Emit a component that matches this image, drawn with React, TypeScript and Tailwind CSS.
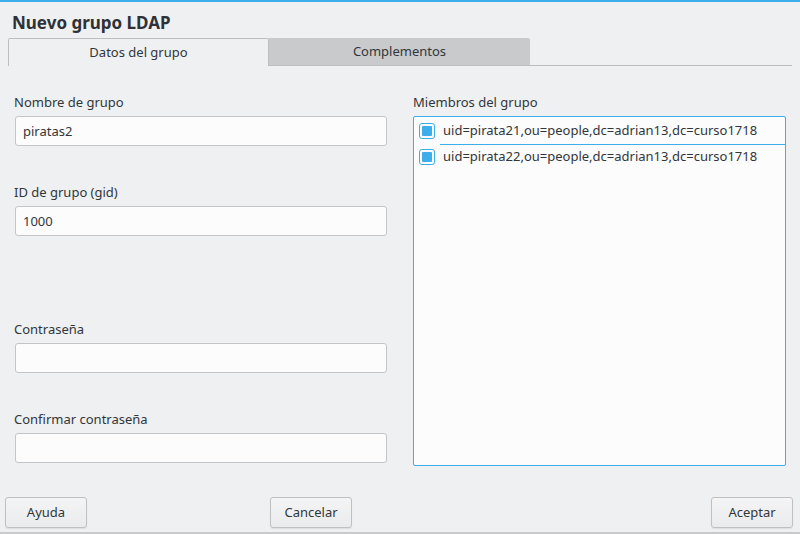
import React from "react";

const FONT = { fontFamily: '"Noto Sans", "Open Sans", sans-serif' };

function Field({ label, value, className }: { label: string; value?: string; className?: string }) {
  return (
    <div className={className}>
      <div className="-ml-px h-[18px] leading-[18px]">{label}</div>
      <div className="mt-[5px] h-[30px] w-[372px] rounded-[3px] border border-[#c4c5c6] bg-[#fcfcfc] px-[7px] leading-[28px]">
        {value}
      </div>
    </div>
  );
}

function Member({ text, focused }: { text: string; focused?: boolean }) {
  return (
    <div className="relative flex h-[26px] items-center">
      <span className="ml-[5px] flex h-[16px] w-[16px] items-center justify-center rounded-[3px] border border-[#3daee9] bg-[#fcfcfc]">
        <span className="h-[10px] w-[10px] rounded-[1px] bg-[#3daee9]" />
      </span>
      <span className="ml-[8px]">{text}</span>
      {focused && <span className="absolute bottom-[-1px] left-[26px] right-0 h-px bg-[#3daee9]" />}
    </div>
  );
}

function Btn({ label }: { label: string }) {
  return (
    <button className="h-[31px] w-[82px] rounded-[3px] border border-[#bfc0c1] bg-gradient-to-b from-[#f4f4f5] to-[#eaebec] text-center shadow-[0_1px_1px_rgba(0,0,0,0.08)]">
      {label}
    </button>
  );
}

export default function App() {
  return (
    <div style={FONT} className="flex h-[534px] w-[800px] flex-col bg-[#eff0f1] text-[13px] text-[#31363b]">
      <div className="h-[2px] bg-[#3daee9]" />

      {/* title */}
      <div className="mt-[10px] h-[22px] pl-[12px] text-[17px] font-bold leading-[22px] text-[#2e3236]">
        Nuevo grupo LDAP
      </div>

      {/* tabs */}
      <div className="mt-[4px] ml-[8px] mr-[8px] flex h-[28px] items-stretch">
        <div className="flex w-[261px] items-center justify-center rounded-t-[2px] border-l border-r border-t border-[#bdbebf] bg-[#eff0f1]">
          Datos del grupo
        </div>
        <div className="flex w-[261px] items-center justify-center rounded-tr-[2px] border-b border-[#bdbebf] bg-[#c9cacb]">
          Complementos
        </div>
        <div className="flex-1 border-b border-[#bdbebf]" />
      </div>

      {/* body */}
      <div className="mt-[27px] flex pl-[15px]">
        <div className="flex w-[372px] flex-col">
          <Field label="Nombre de grupo" value="piratas2" />
          <Field label="ID de grupo (gid)" value="1000" className="mt-[37px]" />
          <Field label="Contraseña" className="mt-[84px]" />
          <Field label="Confirmar contraseña" className="mt-[37px]" />
        </div>
        <div className="ml-[26px] flex w-[373px] flex-col">
          <div className="h-[18px] leading-[18px]">Miembros del grupo</div>
          <div className="mt-[5px] h-[350px] rounded-[2px] border border-[#3daee9] bg-[#fcfcfc] pt-[1px]">
            <Member text="uid=pirata21,ou=people,dc=adrian13,dc=curso1718" focused />
            <Member text="uid=pirata22,ou=people,dc=adrian13,dc=curso1718" />
          </div>
        </div>
      </div>

      {/* buttons */}
      <div className="mt-[31px] flex items-start pl-[5px] pr-[7px]">
        <Btn label="Ayuda" />
        <div className="ml-[183px]">
          <Btn label="Cancelar" />
        </div>
        <div className="flex-1" />
        <Btn label="Aceptar" />
      </div>

      <div className="mt-auto h-[2px] bg-[#c9cacb]" />
    </div>
  );
}
